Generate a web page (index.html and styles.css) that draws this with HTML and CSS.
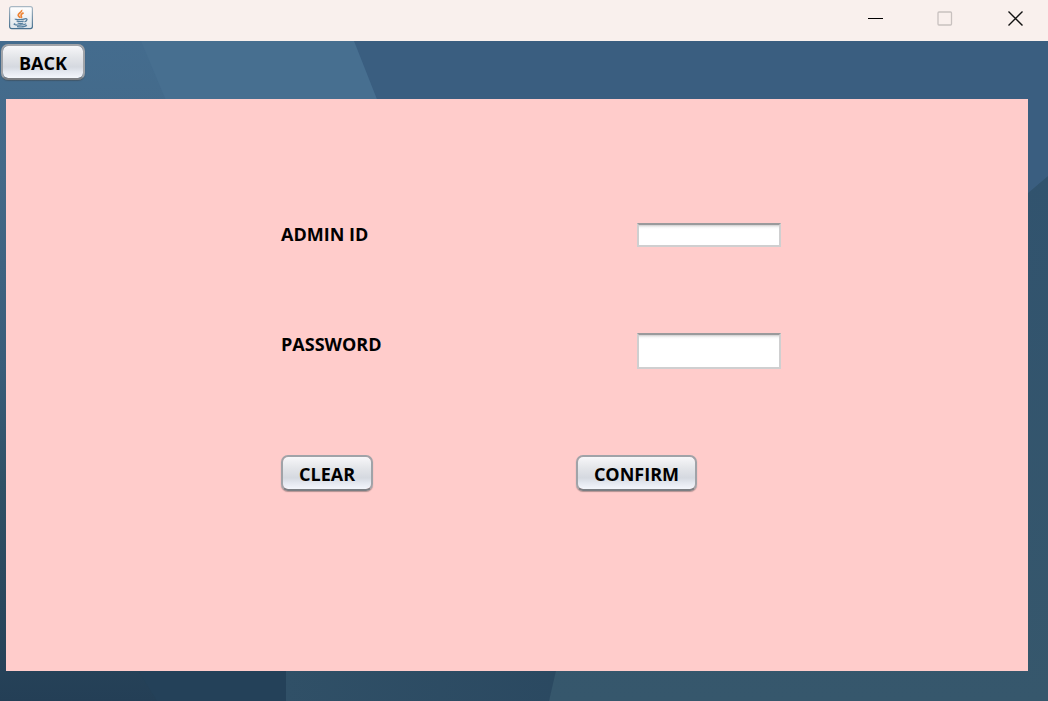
FILE: index.html
```html
<!DOCTYPE html>
<html lang="en">
<head>
<meta charset="utf-8">
<meta name="viewport" content="width=device-width, initial-scale=1">
<title>Admin login</title>
<link rel="stylesheet" href="styles.css">
</head>
<body>
<div class="window">
  <header class="titlebar">
    <svg class="app-icon" viewBox="0 0 24 24" aria-hidden="true">
      <defs>
        <linearGradient id="tile" x1="0" y1="0" x2="0" y2="1"><stop offset="0" stop-color="#fff"/><stop offset="1" stop-color="#dfe5ea"/></linearGradient>
        <linearGradient id="rim" x1="0" y1="0" x2="0" y2="1"><stop offset="0" stop-color="#a9b8c4"/><stop offset="1" stop-color="#47708f"/></linearGradient>
      </defs>
      <rect x=".6" y=".6" width="22.8" height="22" rx="2" fill="url(#tile)" stroke="url(#rim)" stroke-width="1.2"/>
      <path d="M12.600 4c1 2-3.600 3.200-3.400 5.200.1 1.200 1.400 1.800 2.100 2.600M14.600 6.900c-1.800.8-3 1.800-2.400 3 .4.800.7 1.200 0 2.100" fill="none" stroke="#ee8434" stroke-width="1.700"/>
      <path d="M6.500 12.900c-1.400.9 7.500 1 9.300 0M7.600 15c1.400.7 5.700.7 7.200 0M8.600 17c1.600.6 4.400.6 5.700 0M15.700 12.800c3.600-1 2.600 2.300-.2 3M6.200 17.500c-4.600 1.600 8 2.400 11 .3M8 20.600c3.500.4 8.500.1 9.800-1.300" fill="none" stroke="#557f9f" stroke-width="1.300"/>
    </svg>
    <div class="controls">
      <button class="control" type="button" aria-label="Minimize"><svg viewBox="0 0 16 16"><path d="M1 8.500h15" stroke="#000"/></svg></button>
      <button class="control" type="button" aria-label="Maximize" disabled><svg viewBox="0 0 16 16"><rect x="1" y="2" width="13.500" height="13" rx="1" fill="none" stroke="#c8c1bf" stroke-width="1.300"/></svg></button>
      <button class="control" type="button" aria-label="Close"><svg viewBox="0 0 16 16"><path d="M1.500 1.500l14 14M15.500 1.500l-14 14" stroke="#111" stroke-width="1.400"/></svg></button>
    </div>
  </header>
  <main class="desktop">
    <svg class="backdrop" viewBox="0 0 1048 660" preserveAspectRatio="none" aria-hidden="true">
      <defs>
        <linearGradient id="left" x1="0" y1="0" x2="0" y2="1"><stop offset="0" stop-color="#446c8e"/><stop offset=".2" stop-color="#436988"/><stop offset=".5" stop-color="#385c79"/><stop offset=".67" stop-color="#2f5166"/><stop offset="1" stop-color="#243f56"/></linearGradient>
        <linearGradient id="right" x1="0" y1="0" x2="0" y2="1"><stop offset="0" stop-color="#31536e"/><stop offset="1" stop-color="#36576c"/></linearGradient>
        <linearGradient id="base" x1="0" y1="0" x2="1" y2="0"><stop offset="0" stop-color="#305067"/><stop offset="1" stop-color="#2a4860"/></linearGradient>
      </defs>
      <rect width="1048" height="660" fill="url(#left)"/>
      <path d="M141 0h214l130 330H280z" fill="#476f90"/>
      <path d="M354 0h694v136L820 330H484z" fill="#3a5e80"/>
      <path d="M286 500h310l-47 160H285z" fill="url(#base)"/>
      <path d="M1048 135v525H549L626 330H818z" fill="url(#right)"/>
      <path d="M120 600h166v60H157z" fill="#244159"/>
    </svg>
    <nav class="toolbar"><button class="button" type="button">BACK</button></nav>
    <section class="panel">
      <form class="form">
        <div class="row">
          <label class="label" for="admin">ADMIN ID</label>
          <input class="field" id="admin" type="text">
        </div>
        <div class="row">
          <label class="label" for="password">PASSWORD</label>
          <input class="field field-tall" id="password" type="password">
        </div>
        <div class="actions">
          <button class="button" type="reset">CLEAR</button>
          <button class="button" type="button">CONFIRM</button>
        </div>
      </form>
    </section>
  </main>
</div>
</body>
</html>
```
FILE: styles.css
```css
* { box-sizing: border-box; }

body {
  margin: 0;
  font-family: "Open Sans", "Noto Sans", sans-serif;
  font-size: 18px;
  line-height: 22px;
  font-weight: 700;
  color: #000;
}

.window {
  display: flex;
  flex-direction: column;
  min-height: 100vh;
}

.titlebar {
  display: flex;
  justify-content: space-between;
  align-items: flex-start;
  padding: 6px 9px 0;
  height: 41px;
  background: #f9f0ed;
}

.app-icon { width: 24px; height: 24px; }

.controls { display: flex; gap: 22px; }

.control {
  display: grid;
  place-items: center;
  width: 48px;
  height: 24px;
  padding: 0;
  border: 0;
  background: none;
}

.control svg { width: 16px; height: 16px; }

.desktop {
  position: relative;
  isolation: isolate;
  display: flex;
  flex-direction: column;
  flex: 1;
  padding: 3px 20px 30px 6px;
}

.backdrop {
  position: absolute;
  inset: 0;
  z-index: -1;
  width: 100%;
  height: 100%;
}

.toolbar { margin: 0 0 19px -5px; }

.button {
  display: block;
  height: 36px;
  padding: 2px 16px 0;
  border: 2px solid #a0a3a8;
  border-bottom-color: #7b7e83;
  border-radius: 7px;
  background: linear-gradient(#f7f7f9, #e3e5e9 35%, #d5d9e0 65%, #e3e7ef 80%, #f3f6fc) padding-box;
  box-shadow: 0 1px 1px rgb(60 60 60 / 40%);
  color: inherit;
  font: inherit;
}

.panel {
  flex: 1;
  padding: 124px 0 124px 28px;
  background: #ffcccb;
}

.form {
  display: flex;
  flex-direction: column;
  gap: 86px;
  max-width: 500px;
  margin: 0 auto;
}

.row {
  display: flex;
  justify-content: space-between;
  align-items: flex-start;
}

.field {
  width: 144px;
  height: 24px;
  padding: 0 6px;
  border: 2px solid #cfcfd0;
  border-top: 2px solid #9a9a9c;
  background: linear-gradient(#cfcfcf, #f4f4f4 2px, #fff 4px);
  font: inherit;
}

.field-tall { height: 36px; }

.actions {
  display: flex;
  justify-content: space-between;
  padding-right: 84px;
}
```
